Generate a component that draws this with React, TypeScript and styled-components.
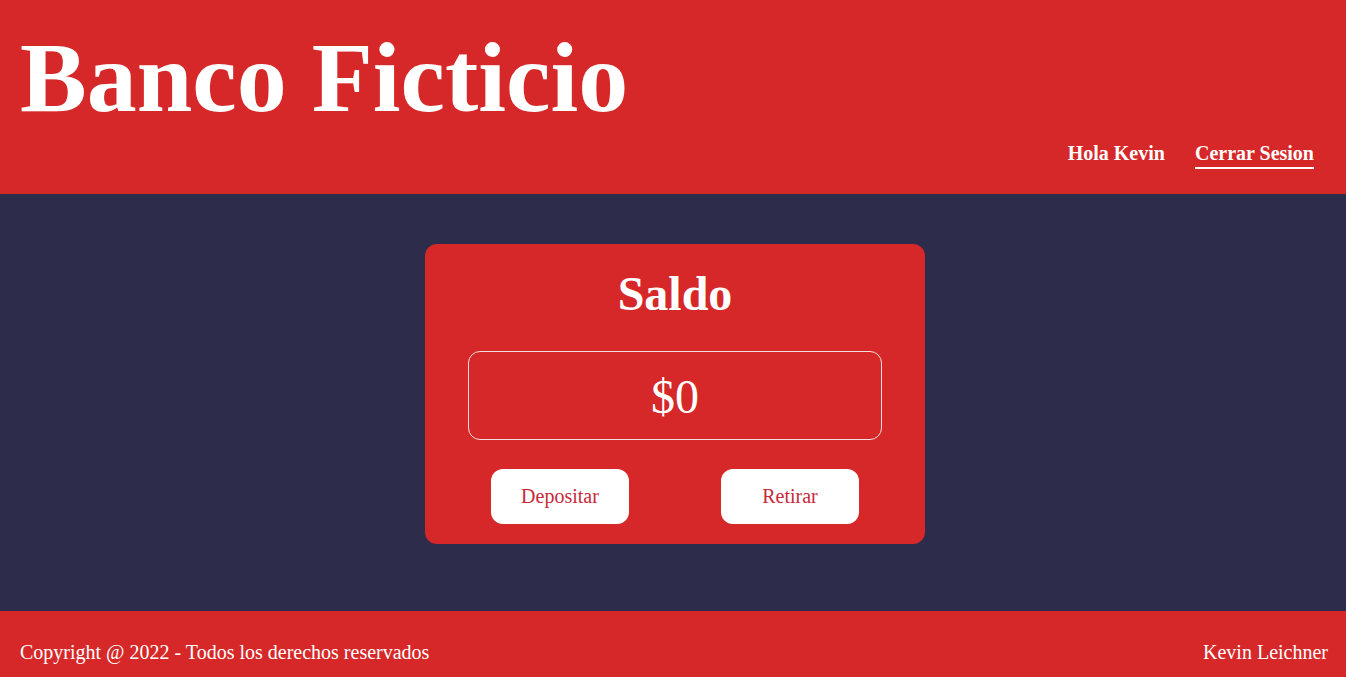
import React from "react";
import styled, { createGlobalStyle } from "styled-components";

const RED = "#d62828";
const NAVY = "#2d2c4a";

const GlobalStyle = createGlobalStyle`
  html, body { margin: 0; padding: 0; }
  body {
    font-family: "Liberation Serif", "Times New Roman", serif;
    background: ${NAVY};
    color: #fff;
  }
  * { box-sizing: border-box; }
`;

const Page = styled.div`
  display: flex;
  flex-direction: column;
  min-height: 677px;
`;

const Header = styled.header`
  background: ${RED};
  height: 194px;
  padding: 20px 32px 25px 20px;
  display: flex;
  flex-direction: column;
`;

const Title = styled.h1`
  margin: 0;
  font-size: 100px;
  font-weight: 700;
  line-height: 115px;
  color: #fff;
`;

const Nav = styled.nav`
  margin-top: auto;
  align-self: flex-end;
  display: flex;
  gap: 30px;
  align-items: flex-start;
`;

const NavItem = styled.a<{ $active?: boolean }>`
  font-size: 20px;
  font-weight: 700;
  line-height: 23px;
  color: #fff;
  text-decoration: none;
  padding-bottom: 2px;
  border-bottom: 2px solid ${(p) => (p.$active ? "#fff" : "transparent")};
  cursor: pointer;
`;

const Main = styled.main`
  flex: 1;
  display: flex;
  justify-content: center;
  align-items: flex-start;
  padding: 50px 0 67px 4px;
`;

const Card = styled.section`
  width: 500px;
  height: 300px;
  background: ${RED};
  border-radius: 12px;
  padding: 22px 43px 20px;
  display: flex;
  flex-direction: column;
  align-items: center;
`;

const CardTitle = styled.h2`
  margin: 0;
  font-size: 48px;
  font-weight: 700;
  line-height: 55px;
`;

const Balance = styled.div`
  margin-top: 30px;
  width: 414px;
  height: 90px;
  border: 1px solid #f3dede;
  border-radius: 12px;
  display: flex;
  align-items: center;
  justify-content: center;
  font-size: 48px;
  line-height: 55px;
  padding-top: 2px;
`;

const Actions = styled.div`
  margin-top: 29px;
  display: flex;
  gap: 92px;
  justify-content: center;
`;

const ActionButton = styled.button`
  width: 138px;
  height: 55px;
  border: none;
  border-radius: 12px;
  background: #fff;
  color: #c8283a;
  font-family: "Liberation Serif", "Times New Roman", serif;
  font-size: 20px;
  cursor: pointer;
`;

const Footer = styled.footer`
  background: ${RED};
  height: 67px;
  padding: 30px 18px 0 20px;
  display: flex;
  justify-content: space-between;
  align-items: flex-start;
  font-size: 20px;
  line-height: 23px;
`;

const FooterText = styled.span`
  color: #fff;
`;

export default function App() {
  return (
    <Page>
      <GlobalStyle />
      <Header>
        <Title>Banco Ficticio</Title>
        <Nav>
          <NavItem>Hola Kevin</NavItem>
          <NavItem $active>Cerrar Sesion</NavItem>
        </Nav>
      </Header>
      <Main>
        <Card>
          <CardTitle>Saldo</CardTitle>
          <Balance>$0</Balance>
          <Actions>
            <ActionButton>Depositar</ActionButton>
            <ActionButton>Retirar</ActionButton>
          </Actions>
        </Card>
      </Main>
      <Footer>
        <FooterText>Copyright @ 2022 - Todos los derechos reservados</FooterText>
        <FooterText>Kevin Leichner</FooterText>
      </Footer>
    </Page>
  );
}
